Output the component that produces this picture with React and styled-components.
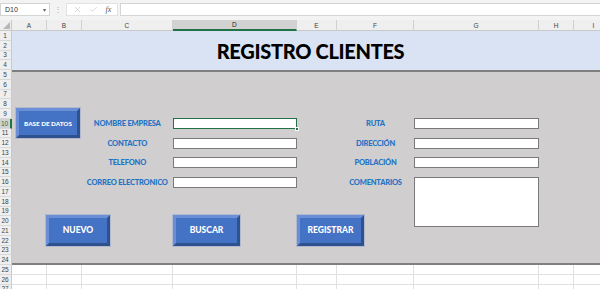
import React from "react";
import styled, { createGlobalStyle } from "styled-components";
import { X, Check } from "lucide-react";

const COLUMNS = ["A", "B", "C", "D", "E", "F", "G", "H", "I"];
const ROWS = Array.from({ length: 27 }, (_, i) => i + 1);

// sheet row n sits on grid row n + 1 (grid row 1 is the column header)
const r = (from, to = from) => `${from + 1} / ${to + 2}`;
// sheet column letter -> grid column (grid column 1 is the row header)
const c = (from, to = from) =>
  `${COLUMNS.indexOf(from) + 2} / ${COLUMNS.indexOf(to) + 3}`;

function App() {
  return (
    <>
      <GlobalStyle />
      <Window>
        <FormulaBar>
          <NameBox>
            <span>D10</span>
            <Caret>▾</Caret>
          </NameBox>
          <Grip>⋮</Grip>
          <IconGroup>
            <X size={9} strokeWidth={1.4} color="#b9b9b9" />
            <Check size={9} strokeWidth={1.4} color="#b9b9b9" />
            <Fx>fx</Fx>
          </IconGroup>
          <FormulaInput />
        </FormulaBar>

        <Sheet>
          <Corner>
            <svg width="7" height="7" viewBox="0 0 7 7">
              <polygon points="7,0 7,7 0,7" fill="#b7b7b7" />
            </svg>
          </Corner>
          {COLUMNS.map((col, i) => (
            <ColHeader key={col} $col={i + 2} $active={col === "D"}>
              {col}
            </ColHeader>
          ))}
          {ROWS.map((row) => (
            <RowHeader key={row} $row={row + 1} $active={row === 10}>
              {row}
            </RowHeader>
          ))}

          <TitleBand />
          <Title>REGISTRO CLIENTES</Title>
          <FormBand />

          <Button $col={c("A", "B")} $row={r(9, 11)} $offset={4} $w={64} $size={6.3}>
            BASE DE DATOS
          </Button>

          <Label $col={c("C")} $row={r(10)}>NOMBRE EMPRESA</Label>
          <Label $col={c("C")} $row={r(12)}>CONTACTO</Label>
          <Label $col={c("C")} $row={r(14)}>TELEFONO</Label>
          <Label $col={c("C")} $row={r(16)}>CORREO ELECTRONICO</Label>

          <Field $col={c("D")} $row={r(10)} $selected>
            <Handle />
          </Field>
          <Field $col={c("D")} $row={r(12)} />
          <Field $col={c("D")} $row={r(14)} />
          <Field $col={c("D")} $row={r(16)} />

          <Label $col={c("F")} $row={r(10)}>RUTA</Label>
          <Label $col={c("F")} $row={r(12)}>DIRECCIÓN</Label>
          <Label $col={c("F")} $row={r(14)}>POBLACIÓN</Label>
          <Label $col={c("F")} $row={r(16)}>COMENTARIOS</Label>

          <Field $col={c("G")} $row={r(10)} />
          <Field $col={c("G")} $row={r(12)} />
          <Field $col={c("G")} $row={r(14)} />
          <Field $col={c("G")} $row={r(16, 20)} />

          <Button $col={c("A", "C")} $row={r(20, 22)} $offset={34} $w={64}>
            NUEVO
          </Button>
          <Button $col={c("D")} $row={r(20, 22)} $offset={0.5} $w={67}>
            BUSCAR
          </Button>
          <Button $col={c("E", "F")} $row={r(20, 22)} $offset={0} $w={67}>
            REGISTRAR
          </Button>

          {[25, 26, 27].map((row) =>
            COLUMNS.map((col, i) => (
              <Cell key={`${col}${row}`} $col={i + 2} $row={row + 1} />
            ))
          )}
        </Sheet>
      </Window>
    </>
  );
}

export default App;

const GlobalStyle = createGlobalStyle`
  html, body {
    margin: 0;
    padding: 0;
    background: #ffffff;
    overflow: hidden;
  }
  * {
    box-sizing: border-box;
  }
`;

const Window = styled.div`
  width: 600px;
  height: 289px;
  overflow: hidden;
  font-family: "Liberation Sans", Arial, sans-serif;
  background: #ffffff;
`;

const FormulaBar = styled.div`
  height: 20px;
  display: flex;
  align-items: center;
  background: #f3f3f3;
  padding: 0 0 1px 0;
`;

const NameBox = styled.div`
  width: 50px;
  height: 13px;
  background: #ffffff;
  border: 1px solid #d4d4d4;
  display: flex;
  align-items: center;
  justify-content: space-between;
  padding: 0 3px 0 4px;
  font-size: 7px;
  color: #333333;
`;

const Caret = styled.span`
  font-size: 6px;
  color: #666666;
`;

const Grip = styled.span`
  width: 16px;
  text-align: center;
  font-size: 8px;
  color: #b0b0b0;
`;

const IconGroup = styled.div`
  width: 52px;
  height: 13px;
  background: #ffffff;
  border: 1px solid #e2e2e2;
  display: flex;
  align-items: center;
  justify-content: space-around;
  padding: 0 2px;
`;

const Fx = styled.span`
  font-family: "Liberation Serif", serif;
  font-style: italic;
  font-size: 8px;
  color: #555555;
`;

const FormulaInput = styled.div`
  flex: 1;
  height: 13px;
  margin-left: 2px;
  background: #ffffff;
  border: 1px solid #d4d4d4;
  border-right: none;
`;

const Sheet = styled.div`
  display: grid;
  grid-template-columns: 12px 35px 35px 90.5px 124.5px 40px 77px 125px 35px 40px;
  grid-template-rows: 11px repeat(27, 9.75px);
  width: 614px;
`;

const Corner = styled.div`
  grid-column: 1;
  grid-row: 1;
  background: #efefef;
  border-right: 1px solid #c9c9c9;
  border-bottom: 1px solid #c9c9c9;
  display: flex;
  align-items: flex-end;
  justify-content: flex-end;
  padding: 0 1px 1px 0;
`;

const ColHeader = styled.div`
  grid-column: ${(p) => p.$col};
  grid-row: 1;
  background: ${(p) => (p.$active ? "#d2d2d2" : "#efefef")};
  border-right: 1px solid #d0d0d0;
  border-bottom: ${(p) => (p.$active ? "2px solid #217346" : "1px solid #c9c9c9")};
  font-size: 6.5px;
  color: ${(p) => (p.$active ? "#222222" : "#444444")};
  display: flex;
  align-items: center;
  justify-content: center;
`;

const RowHeader = styled.div`
  grid-column: 1;
  grid-row: ${(p) => p.$row};
  background: ${(p) => (p.$active ? "#d2d2d2" : "#efefef")};
  border-right: ${(p) => (p.$active ? "2px solid #217346" : "1px solid #c9c9c9")};
  border-bottom: 1px solid #d8d8d8;
  font-size: 6.5px;
  color: ${(p) => (p.$active ? "#217346" : "#444444")};
  display: flex;
  align-items: center;
  justify-content: center;
  padding-right: 1px;
`;

const TitleBand = styled.div`
  grid-column: 2 / -1;
  grid-row: ${r(1, 4)};
  background: #dae3f3;
`;

const Title = styled.h1`
  grid-column: ${c("B", "H")};
  grid-row: ${r(1, 4)};
  margin: 0;
  display: flex;
  align-items: center;
  justify-content: center;
  font-family: Lato, "Liberation Sans", sans-serif;
  font-weight: 900;
  font-size: 20px;
  letter-spacing: -0.3px;
  color: #000000;
  padding-top: 1px;
`;

const FormBand = styled.div`
  grid-column: 2 / -1;
  grid-row: ${r(5, 24)};
  background: #d0cece;
  border-top: 2px solid #7f7f7f;
  border-bottom: 2px solid #7f7f7f;
`;

const Label = styled.div`
  grid-column: ${(p) => p.$col};
  grid-row: ${(p) => p.$row};
  display: flex;
  align-items: center;
  justify-content: center;
  white-space: nowrap;
  font-family: Lato, "Liberation Sans", sans-serif;
  font-weight: 900;
  font-size: 7.5px;
  letter-spacing: -0.2px;
  color: #1f74c6;
`;

const Field = styled.div`
  grid-column: ${(p) => p.$col};
  grid-row: ${(p) => p.$row};
  position: relative;
  margin: -0.5px 0;
  background: #ffffff;
  border: 1.5px solid ${(p) => (p.$selected ? "#217346" : "#7a7a7a")};
`;

const Handle = styled.span`
  position: absolute;
  right: -3px;
  bottom: -3px;
  width: 4px;
  height: 4px;
  background: #217346;
  border: 1px solid #ffffff;
`;

const Button = styled.div`
  grid-column: ${(p) => p.$col};
  grid-row: ${(p) => p.$row};
  justify-self: start;
  width: ${(p) => p.$w}px;
  margin: -1px 0 0 ${(p) => p.$offset}px;
  background: #4472c4;
  border: 3px solid;
  border-color: #6a8fd6 #2e5190 #2e5190 #6a8fd6;
  box-shadow: 0 0 0 1px #b3b8cc;
  display: flex;
  align-items: center;
  justify-content: center;
  font-family: Lato, "Liberation Sans", sans-serif;
  font-weight: 900;
  font-size: ${(p) => p.$size || 8.5}px;
  color: #ffffff;
  white-space: nowrap;
`;

const Cell = styled.div`
  grid-column: ${(p) => p.$col};
  grid-row: ${(p) => p.$row};
  background: #ffffff;
  border-right: 1px solid #e1e1e1;
  border-bottom: 1px solid #e1e1e1;
`;
